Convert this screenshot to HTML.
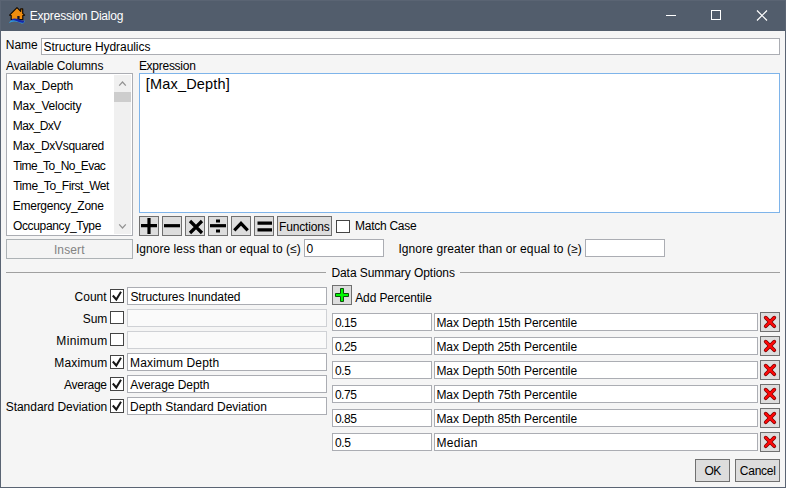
<!DOCTYPE html>
<html><head><meta charset="utf-8"><title>Expression Dialog</title>
<style>
html,body{margin:0;padding:0;}
body{width:786px;height:488px;overflow:hidden;background:#f5f5f5;font-family:"Liberation Sans",sans-serif;font-size:12px;color:#000;position:relative;}
.abs,.t,.in,.btn,.cb,.ln{position:absolute;box-sizing:border-box;}
.t{white-space:nowrap;line-height:16px;height:16px;}
.in{background:#fff;border:1px solid #abadb3;}
.in.dis{background:#fafafa;border-color:#cfd1d5;}
.btn{background:#dddddd;border:1px solid #707070;}
.cb{background:#fff;border:1px solid #444;}
.ln{height:1px;background:#a0a0a0;}
#win{position:absolute;left:0;top:0;width:786px;height:488px;box-sizing:border-box;border:1px solid #5a6473;}
#title{position:absolute;left:0;top:0;width:786px;height:31px;background:#525d6c;}
</style></head><body>
<div id="title"></div>
<div id="win"></div>
<svg class="abs" style="left:8px;top:6px" width="18" height="18" viewBox="0 0 18 18">
 <path d="M1.600 9.200 L9 1.700 L12.700 5.400 L12.700 2.800 L14.700 2.800 L14.700 7.300 L16.600 9.200 L14.800 9.500 L14.800 13.500 L3.200 13.500 L3.200 9.500 Z" fill="#f08d0e" stroke="#120a02" stroke-width="1.150" stroke-linejoin="round"/>
 <rect x="9.300" y="10" width="2.300" height="3.500" fill="#1a1424"/>
 <path d="M0.800 17.200 Q3 13.300 6.500 13.300 Q10 13.500 13 15.300 Q15 16.300 16.500 14 L16.500 16 Q15.500 18 13.500 17.500 Q9 15 6 15.500 Q3 15.800 0.800 17.200 Z" fill="#2f9be0"/>
 <path d="M4.500 12.700 Q7.500 11.900 10.500 13.300 Q14 15.200 16.400 14.600 L15.400 17 Q11 16.500 8.500 15 Q6 13.800 3.300 14.400 Z" fill="#1626a6"/>
</svg>
<!-- caption buttons -->
<svg class="abs" style="left:660px;top:0" width="126" height="31" viewBox="0 0 126 31">
 <path d="M6 15.500 H16" stroke="#fff" stroke-width="1" fill="none"/>
 <rect x="51.500" y="10.500" width="9" height="9" stroke="#fff" stroke-width="1" fill="none"/>
 <path d="M97 10.500 L107 20.500 M107 10.500 L97 20.500" stroke="#fff" stroke-width="1.200" fill="none"/>
</svg>

<!-- listbox -->
<div class="abs" style="left:6px;top:73px;width:127px;height:163px;background:#fff;border:1px solid #abadb3;"></div>
<div class="abs" style="left:114px;top:75px;width:17px;height:159px;background:#f0f0f0;"></div>
<div class="abs" style="left:114px;top:92px;width:17px;height:10px;background:#cdcdcd;"></div>
<svg class="abs" style="left:114px;top:75px" width="17" height="159" viewBox="0 0 17 159">
 <path d="M5.200 10.700 L8.500 7 L11.800 10.700" stroke="#929292" stroke-width="1.200" fill="none"/>
 <path d="M5.200 149.300 L8.500 153 L11.800 149.300" stroke="#929292" stroke-width="1.200" fill="none"/>
</svg>

<!-- expression box -->
<div class="abs" style="left:139px;top:73px;width:641px;height:140px;background:#fff;border:1px solid #7eb4ea;"></div>

<!-- group header lines -->
<div class="ln" style="left:6px;top:272px;width:320px;"></div>
<div class="ln" style="left:460px;top:272px;width:320px;"></div>

<div class="in" style="left:41px;top:38px;width:739px;height:17px;"></div>
<div class="in" style="left:304px;top:239px;width:80px;height:18px;"></div>
<div class="in" style="left:585px;top:239px;width:80px;height:18px;"></div>
<div class="in" style="left:127px;top:287px;width:200px;height:18px;"></div>
<div class="in dis" style="left:127px;top:309px;width:200px;height:18px;"></div>
<div class="in dis" style="left:127px;top:331px;width:200px;height:18px;"></div>
<div class="in" style="left:127px;top:353px;width:200px;height:18px;"></div>
<div class="in" style="left:127px;top:375px;width:200px;height:18px;"></div>
<div class="in" style="left:127px;top:397px;width:200px;height:18px;"></div>
<div class="in" style="left:332px;top:313px;width:100px;height:18px;"></div>
<div class="in" style="left:434px;top:313px;width:324px;height:18px;"></div>
<div class="btn" style="left:760px;top:312px;width:20px;height:20px;"></div>
<div class="in" style="left:332px;top:337px;width:100px;height:18px;"></div>
<div class="in" style="left:434px;top:337px;width:324px;height:18px;"></div>
<div class="btn" style="left:760px;top:336px;width:20px;height:20px;"></div>
<div class="in" style="left:332px;top:361px;width:100px;height:18px;"></div>
<div class="in" style="left:434px;top:361px;width:324px;height:18px;"></div>
<div class="btn" style="left:760px;top:360px;width:20px;height:20px;"></div>
<div class="in" style="left:332px;top:385px;width:100px;height:18px;"></div>
<div class="in" style="left:434px;top:385px;width:324px;height:18px;"></div>
<div class="btn" style="left:760px;top:384px;width:20px;height:20px;"></div>
<div class="in" style="left:332px;top:409px;width:100px;height:18px;"></div>
<div class="in" style="left:434px;top:409px;width:324px;height:18px;"></div>
<div class="btn" style="left:760px;top:408px;width:20px;height:20px;"></div>
<div class="in" style="left:332px;top:433px;width:100px;height:18px;"></div>
<div class="in" style="left:434px;top:433px;width:324px;height:18px;"></div>
<div class="btn" style="left:760px;top:432px;width:20px;height:20px;"></div>
<div class="btn" style="left:139px;top:216px;width:20px;height:20px;"></div>
<div class="btn" style="left:162px;top:216px;width:20px;height:20px;"></div>
<div class="btn" style="left:185px;top:216px;width:20px;height:20px;"></div>
<div class="btn" style="left:208px;top:216px;width:20px;height:20px;"></div>
<div class="btn" style="left:231px;top:216px;width:20px;height:20px;"></div>
<div class="btn" style="left:254px;top:216px;width:20px;height:20px;"></div>
<div class="btn" style="left:277px;top:216px;width:55px;height:20px;"></div>
<div class="btn" style="left:6px;top:239px;width:127px;height:20px;background:#f4f4f4;border-color:#adb2b5;"></div>
<div class="btn" style="left:332px;top:285px;width:20px;height:20px;"></div>
<div class="btn" style="left:695px;top:459px;width:35px;height:23px;"></div>
<div class="btn" style="left:735px;top:459px;width:45px;height:23px;"></div>
<div class="cb" style="left:336px;top:220px;width:14px;height:13px;"></div>
<div class="cb" style="left:110px;top:289px;width:14px;height:14px;"></div>
<div class="cb" style="left:110px;top:311px;width:14px;height:13px;"></div>
<div class="cb" style="left:110px;top:333px;width:14px;height:13px;"></div>
<div class="cb" style="left:110px;top:355px;width:14px;height:14px;"></div>
<div class="cb" style="left:110px;top:377px;width:14px;height:14px;"></div>
<div class="cb" style="left:110px;top:399px;width:14px;height:14px;"></div>

<!-- operator glyphs -->
<svg class="abs" style="left:139px;top:216px" width="135" height="20" viewBox="0 0 135 20">
 <g stroke="#000" stroke-width="3.200" fill="none">
  <path d="M2 9.700 H18 M10 2 V18"/>
  <path d="M25 9.700 H41"/>
  <path d="M51 5 L63 17 M63 5 L51 17"/>
  <path d="M71 9.700 H87"/>
  <path d="M95.300 14.300 L102 7.300 L108.700 14.300"/>
  <path d="M118.500 7.200 H133 M118.500 13.800 H133"/>
 </g>
 <rect x="77" y="3.500" width="4" height="3" fill="#000"/>
 <rect x="77" y="13.500" width="4" height="3" fill="#000"/>
</svg>

<!-- check marks -->
<svg class="abs" style="left:110px;top:289px" width="14" height="130" viewBox="0 0 14 130">
 <g stroke="#161616" stroke-width="2" fill="none" stroke-linejoin="miter">
  <path d="M2.800 6.5 L6.300 10.5 L11 2.7"/>
  <path d="M2.800 72.5 L6.300 76.5 L11 68.7"/>
  <path d="M2.800 94.5 L6.300 98.5 L11 90.7"/>
  <path d="M2.800 116.5 L6.300 120.5 L11 112.7"/>
 </g>
</svg>

<!-- green plus -->
<svg class="abs" style="left:332px;top:285px" width="20" height="20" viewBox="0 0 20 20">
 <path d="M8.500 3.500 H11.500 V8.500 H16.500 V11.500 H11.500 V16.500 H8.500 V11.500 H3.500 V8.500 H8.500 Z" fill="#00fb00" stroke="#0a4f0a" stroke-width="1"/>
</svg>

<!-- red X glyphs -->
<svg class="abs" style="left:760px;top:312px" width="20" height="140" viewBox="0 0 20 140">
 <path d="M5.700 5.6 L14.300 14.2 M14.300 5.6 L5.700 14.2 M5.700 29.6 L14.300 38.2 M14.300 29.6 L5.700 38.2 M5.700 53.6 L14.300 62.2 M14.300 53.6 L5.700 62.2 M5.700 77.6 L14.300 86.2 M14.300 77.6 L5.700 86.2 M5.700 101.6 L14.300 110.2 M14.300 101.6 L5.700 110.2 M5.700 125.6 L14.300 134.2 M14.300 125.6 L5.700 134.2" stroke="#7a0505" stroke-width="3.700" stroke-linecap="round" fill="none"/>
 <path d="M5.700 5.6 L14.300 14.2 M14.300 5.6 L5.700 14.2 M5.700 29.6 L14.300 38.2 M14.300 29.6 L5.700 38.2 M5.700 53.6 L14.300 62.2 M14.300 53.6 L5.700 62.2 M5.700 77.6 L14.300 86.2 M14.300 77.6 L5.700 86.2 M5.700 101.6 L14.300 110.2 M14.300 101.6 L5.700 110.2 M5.700 125.6 L14.300 134.2 M14.300 125.6 L5.700 134.2" stroke="#ff0808" stroke-width="2.200" stroke-linecap="round" fill="none"/>
</svg>

<div class="t" style="left:29.7px;top:8px;letter-spacing:-0.18px;color:#fff;">Expression Dialog</div>
<div class="t" style="left:5.8px;top:37px;letter-spacing:-0.08px;">Name</div>
<div class="t" style="left:43.5px;top:39px;letter-spacing:-0.06px;">Structure Hydraulics</div>
<div class="t" style="left:6.0px;top:58px;letter-spacing:-0.11px;">Available Columns</div>
<div class="t" style="left:138.9px;top:58px;letter-spacing:-0.27px;">Expression</div>
<div class="t" style="left:145.7px;top:74px;letter-spacing:0.20px;font-size:14.5px;line-height:20px;height:20px;">[Max_Depth]</div>
<div class="t" style="left:12.8px;top:78px;letter-spacing:-0.13px;">Max_Depth</div>
<div class="t" style="left:12.8px;top:98px;letter-spacing:-0.19px;">Max_Velocity</div>
<div class="t" style="left:12.8px;top:118px;letter-spacing:-0.60px;">Max_DxV</div>
<div class="t" style="left:12.8px;top:138px;letter-spacing:-0.30px;">Max_DxVsquared</div>
<div class="t" style="left:13.2px;top:158px;letter-spacing:-0.60px;">Time_To_No_Evac</div>
<div class="t" style="left:13.2px;top:178px;letter-spacing:-0.45px;">Time_To_First_Wet</div>
<div class="t" style="left:12.8px;top:198px;letter-spacing:-0.28px;">Emergency_Zone</div>
<div class="t" style="left:12.9px;top:218px;letter-spacing:-0.33px;">Occupancy_Type</div>
<div class="t" style="left:279.1px;top:219px;letter-spacing:-0.18px;">Functions</div>
<div class="t" style="left:355.1px;top:218px;letter-spacing:-0.28px;">Match Case</div>
<div class="t" style="left:53.9px;top:242px;letter-spacing:0.13px;color:#838383;">Insert</div>
<div class="t" style="left:135.9px;top:241px;letter-spacing:0.05px;">Ignore less than or equal to (≤)</div>
<div class="t" style="left:306.6px;top:241px;letter-spacing:0.00px;">0</div>
<div class="t" style="left:398.4px;top:241px;letter-spacing:0.10px;">Ignore greater than or equal to (≥)</div>
<div class="t" style="left:331.4px;top:265px;letter-spacing:-0.06px;">Data Summary Options</div>
<div class="t" style="left:74.6px;top:289px;letter-spacing:-0.01px;">Count</div>
<div class="t" style="left:82.7px;top:311px;letter-spacing:-0.06px;">Sum</div>
<div class="t" style="left:56.3px;top:333px;letter-spacing:0.37px;">Minimum</div>
<div class="t" style="left:54.3px;top:355px;letter-spacing:0.15px;">Maximum</div>
<div class="t" style="left:64.0px;top:377px;letter-spacing:-0.24px;">Average</div>
<div class="t" style="left:5.7px;top:399px;letter-spacing:-0.03px;">Standard Deviation</div>
<div class="t" style="left:130.4px;top:289px;letter-spacing:-0.07px;">Structures Inundated</div>
<div class="t" style="left:130.1px;top:355px;letter-spacing:0.14px;">Maximum Depth</div>
<div class="t" style="left:130.3px;top:377px;letter-spacing:-0.05px;">Average Depth</div>
<div class="t" style="left:130.1px;top:399px;letter-spacing:-0.03px;">Depth Standard Deviation</div>
<div class="t" style="left:355.2px;top:290px;letter-spacing:-0.11px;">Add Percentile</div>
<div class="t" style="left:704.5px;top:463px;letter-spacing:-0.60px;">OK</div>
<div class="t" style="left:739.8px;top:463px;letter-spacing:-0.24px;">Cancel</div>
<div class="t" style="left:334.9px;top:315px;letter-spacing:-0.48px;">0.15</div>
<div class="t" style="left:436.4px;top:315px;letter-spacing:-0.03px;">Max Depth 15th Percentile</div>
<div class="t" style="left:334.9px;top:339px;letter-spacing:-0.48px;">0.25</div>
<div class="t" style="left:436.4px;top:339px;letter-spacing:-0.03px;">Max Depth 25th Percentile</div>
<div class="t" style="left:334.9px;top:363px;letter-spacing:-0.38px;">0.5</div>
<div class="t" style="left:436.4px;top:363px;letter-spacing:-0.03px;">Max Depth 50th Percentile</div>
<div class="t" style="left:334.9px;top:387px;letter-spacing:-0.48px;">0.75</div>
<div class="t" style="left:436.4px;top:387px;letter-spacing:-0.03px;">Max Depth 75th Percentile</div>
<div class="t" style="left:334.9px;top:411px;letter-spacing:-0.48px;">0.85</div>
<div class="t" style="left:436.4px;top:411px;letter-spacing:-0.03px;">Max Depth 85th Percentile</div>
<div class="t" style="left:334.9px;top:435px;letter-spacing:-0.38px;">0.5</div>
<div class="t" style="left:436.4px;top:435px;letter-spacing:0.33px;">Median</div>
</body></html>
